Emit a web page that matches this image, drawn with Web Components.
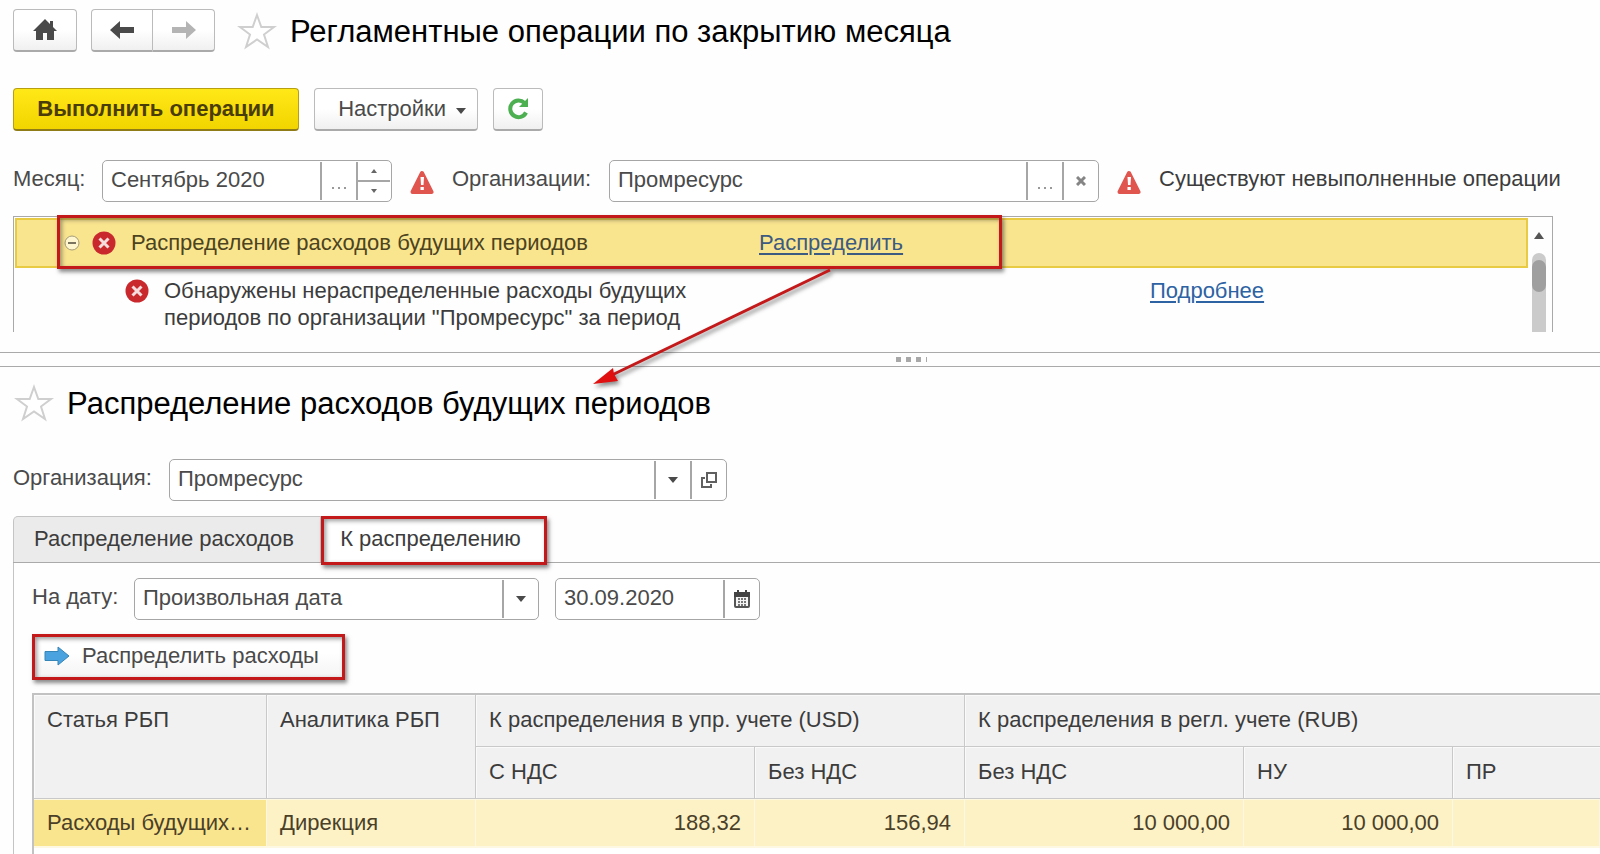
<!DOCTYPE html>
<html lang="ru">
<head>
<meta charset="utf-8">
<title>Регламентные операции по закрытию месяца</title>
<style>
  html, body { margin: 0; height: 100%; }
  body {
    background: #fefefe; color: #4a4a4a; overflow: hidden;
    font: 22px/26px "Liberation Sans", Arial, sans-serif;
  }
</style>
</head>
<body>
<month-closing></month-closing>

<script>
const ICONS = {
  home: ['0 0 24 22', 24, 22, '<path fill="#4a4a4a" d="M12 0 0 12h3v9h7v-7h4v7h7v-9h3l-4-4V2h-3v3z"/>'],
  back: ['0 0 24 18', 24, 18, '<path fill="#4a4a4a" d="M0 9 10 0v6h14v6H10v6z"/>'],
  forward: ['0 0 24 18', 24, 18, '<path fill="#b4b4b4" d="M24 9 14 0v6H0v6h14v6z"/>'],
  star: ['0 0 40 38', 40, 38, '<path fill="#fff" stroke="#cfcfcf" stroke-width="2" d="m20 3 4.300 12H37L27 22.500 31 35l-11-7.500L9 35l4-12.500L3 15h12.700z"/>'],
  refresh: ['0 0 24 24', 24, 24, '<path fill="none" stroke="#4caf50" stroke-width="4" d="M18.500 6A8.300 8.300 0 1 0 20 15.500"/><path fill="#4caf50" d="M22 1v9h-9l3-3 3-3z"/>'],
  caret: ['0 0 10 6', 10, 6, '<path fill="#4a4a4a" d="M0 0h10L5 6z"/>'],
  up: ['0 0 6 4', 6, 4, '<path fill="#666" d="M0 4h6L3 0z"/>'],
  down: ['0 0 6 4', 6, 4, '<path fill="#666" d="M0 0h6L3 4z"/>'],
  scrollup: ['0 0 10 7', 10, 7, '<path fill="#555" d="M0 7h10L5 0z"/>'],
  close: ['0 0 10 10', 10, 10, '<path stroke="#858585" stroke-width="3" d="m1 1 8 8M9 1 1 9"/>'],
  dots: ['0 0 14 4', 14, 4, '<path fill="#999" d="M0 1h2v2H0zM6 1h2v2H6zM12 1h2v2h-2z"/>'],
  open: ['0 0 16 16', 16, 16, '<path fill="none" stroke="#606060" stroke-width="2" d="M6 1h9v9H6zM4 6H1v9h9v-3"/>'],
  calendar: ['0 0 16 18', 16, 18, '<rect x="1" y="3" width="14" height="14" rx="1" fill="#f4f4f4" stroke="#555" stroke-width="2"/><path fill="#444" d="M0 2h16v5H0zM3 0h2v3H3zM11 0h2v3h-2z"/><path stroke="#777" stroke-width="2" stroke-dasharray="2 1" d="M4 9h9M4 12h9M4 15h9"/>'],
  warning: ['0 0 24 24', 24, 24, '<path fill="#e0564f" stroke="#e0564f" stroke-width="4" stroke-linejoin="round" d="M12 3 21.500 22h-19z"/><path fill="#fff" d="M10.500 7h3.500l-.500 8h-2.500zM10.500 17h3.300v3h-3.300z"/>'],
  error: ['0 0 24 24', 24, 24, '<circle cx="12" cy="12" r="11.500" fill="#c9282d"/><path stroke="#f6dcdc" stroke-width="3" d="m7.500 7.500 9 9m0-9-9 9"/>'],
  minus: ['0 0 16 16', 16, 16, '<circle cx="8" cy="8" r="7" fill="#fdf6cf" stroke="#a59c78"/><path stroke="#7a7460" stroke-width="2" d="M4 8h8"/>'],
  arrow: ['0 0 26 20', 26, 20, '<path fill="#4aa3df" stroke="#3585b8" d="M1 5.500h13V1l11 9-11 9v-4.500H1z"/>']
};

function define(name, css, html, setup) {
  const template = document.createElement('template');
  template.innerHTML = `<style>*{box-sizing:border-box}[hidden]{display:none!important}${css}</style>${html}`;
  customElements.define(name, class extends HTMLElement {
    constructor() {
      super();
      this.attachShadow({ mode: 'open' }).append(template.content.cloneNode(true));
    }
    connectedCallback() { if (setup) setup(this, this.shadowRoot); }
  });
}

define('app-icon', ':host{display:inline-flex;flex:none}svg{display:block}', '<span></span>', (el, root) => {
  const [box, w, h, body] = ICONS[el.getAttribute('name')];
  root.querySelector('span').innerHTML = `<svg viewBox="${box}" width="${w}" height="${h}" aria-hidden="true">${body}</svg>`;
});

/* Red frame that highlights the slotted content */
define('red-frame', `
  :host { display: block; position: relative; }
  i { position: absolute; inset: 0; border: 3px solid #c4191a; pointer-events: none;
      box-shadow: 2px 3px 4px rgba(60,60,60,.6), inset 2px 2px 4px rgba(60,60,60,.5); }
`, '<slot></slot><i></i>');

define('push-button', `
  :host { display: block; }
  button { display: flex; align-items: center; justify-content: center; gap: 10px; width: 100%; height: 43px; margin: 0; padding: 0 11px;
    font: inherit; color: #4a4a4a; border: 1px solid #bbb; border-bottom: 2px solid #aaa; border-radius: 4px;
    background: linear-gradient(#fff 50%, #f0f0f0); white-space: nowrap; }
  :host([kind=primary]) button { font-weight: bold; color: #4b3d08; background: linear-gradient(#ffe817, #f2d500); border-color: #b79f10; border-bottom-color: #8f7c16; }
  :host([kind=menu]) button { justify-content: flex-end; }
  :host([kind=left]) button { border-radius: 4px 0 0 4px; }
  :host([kind=right]) button { border-radius: 0 4px 4px 0; border-left: 0; }
  :host([kind=flat]) button { height: 46px; border: 0; border-radius: 0; justify-content: flex-start; gap: 12px; padding: 0 12px 2px; background: linear-gradient(#fff 40%, #f3f3f3); }
`, '<button type="button"><slot></slot></button>', (el, root) => {
  if (el.hasAttribute('name')) root.querySelector('button').setAttribute('aria-label', el.getAttribute('name'));
});

define('page-title', `
  :host { display: flex; align-items: center; gap: 13px; color: #000; }
  h1 { margin: 0; padding-top: 2px; font-size: 31px; line-height: 40px; font-weight: normal; white-space: nowrap; }
`, '<app-icon name="star"></app-icon><h1><slot></slot></h1>');

define('form-field', `
  :host { display: flex; align-items: center; min-width: 0; }
  label { flex: none; width: var(--label); padding-bottom: 4px; white-space: nowrap; }
  .box { flex: 1; display: flex; min-width: 0; height: 42px; border: 1px solid #a6a6a6; border-radius: 5px; background: #fff; position: relative; }
  input, select { flex: 1; min-width: 0; width: 0; border: 0; margin: 0; padding: 0 8px 2px; font: inherit; color: inherit; background: none; outline: 0; appearance: none; }
  button, .mark { flex: none; display: flex; align-items: center; justify-content: center; width: 36px; margin: 1px 0; padding: 0;
    border: 0; border-left: 2px solid #a6a6a6; background: none; }
  .mark { pointer-events: none; }
  .low { padding-top: 13px; }
  .spin { display: flex; flex-direction: column; flex: none; width: 34px; margin: 1px 1px 1px 0; border-left: 2px solid #a6a6a6; }
  .spin button { flex: 1; width: 100%; margin: 0; border: 0; }
  .spin button + button { border-top: 2px solid #a6a6a6; }
`, '<label for="c"></label><div class="box"></div>', (el, root) => {
  const value = el.getAttribute('value');
  const parts = {
    dots: '<button type="button" class="low" aria-label="Выбрать"><app-icon name="dots"></app-icon></button>',
    close: '<button type="button" aria-label="Очистить"><app-icon name="close"></app-icon></button>',
    open: '<button type="button" aria-label="Открыть"><app-icon name="open"></app-icon></button>',
    calendar: '<button type="button" aria-label="Календарь"><app-icon name="calendar"></app-icon></button>',
    drop: '<span class="mark"><app-icon name="caret"></app-icon></span>',
    spin: '<span class="spin"><button type="button" aria-label="Больше"><app-icon name="up"></app-icon></button><button type="button" aria-label="Меньше"><app-icon name="down"></app-icon></button></span>'
  };
  const names = el.getAttribute('parts').split(' ');
  const control = names.includes('drop') ? `<select id="c"><option>${value}</option></select>` : `<input id="c" type="text" value="${value}">`;
  root.querySelector('.box').innerHTML = control + names.map(n => parts[n]).join('');
  const label = root.querySelector('label');
  if (el.hasAttribute('label')) label.textContent = el.getAttribute('label');
  else { label.hidden = true; root.querySelector('#c').setAttribute('aria-label', 'Дата'); }
});

define('operation-list', `
  :host { display: flex; height: 116px; border: 1px solid #a9a9a9; border-bottom: 0; color: #3c3c3c; }
  .rows { flex: 1; min-width: 0; padding: 1px; }
  .row { height: 50px; position: relative; background: #fae58f; color: #4c4320; border: 2px solid #e8cb43; }
  red-frame { position: absolute; left: 40px; top: -5px; width: 945px; height: 54px; }
  .main { display: flex; align-items: center; height: 54px; padding: 2px 0 0 7px; }
  .main .text { flex: none; width: 643px; padding-left: 15px; }
  .main app-icon + app-icon { margin-left: 12px; }
  .detail { display: flex; align-items: flex-start; padding: 9px 0 0 110px; line-height: 27px; }
  .detail app-icon { margin-top: 2px; }
  .detail .text { flex: none; width: 1001px; padding-left: 15px; }
  a { color: #2d62a3; text-decoration: underline; text-decoration-thickness: 2px; text-underline-offset: 3px; }
  .row a { color: #3d5a80; }
  .bar { flex: none; width: 23px; display: flex; flex-direction: column; align-items: center; padding: 15px 3px 0 0; gap: 14px; }
  .track { flex: 1; width: 14px; padding-top: 7px; border-radius: 7px 7px 0 0; background: #cbcbcb; }
  .thumb { height: 32px; border-radius: 7px; background: #9f9f9f; }
`, `<div class="rows">
  <div class="row"><red-frame><div class="main"><app-icon name="minus"></app-icon><app-icon name="error"></app-icon>
    <span class="text">Распределение расходов будущих периодов</span><a href="#distribute">Распределить</a></div></red-frame></div>
  <div class="detail"><app-icon name="error"></app-icon>
    <span class="text">Обнаружены нераспределенные расходы будущих<br>периодов по организации "Промресурс" за период</span><a href="#details">Подробнее</a></div>
</div>
<div class="bar"><app-icon name="scrollup"></app-icon><div class="track"><div class="thumb"></div></div></div>`);

define('pane-splitter', `
  :host { display: flex; justify-content: center; align-items: center; gap: 5px; height: 15px; padding-left: 222px; border: solid #aaa; border-width: 1px 0; }
  i { width: 5px; height: 5px; background: #a8a8a8; }
  i:last-child { width: 1px; }
`, '<i></i><i></i><i></i><i></i>');

define('tab-strip', `
  :host { display: flex; height: 47px; border-bottom: 1px solid #aaa; color: #3c3c3c; }
  button { border: 0; margin: 0; font: inherit; color: inherit; background: #fff; white-space: nowrap; }
  .idle { flex: none; width: 308px; height: 46px; padding: 0 6px 1px 0; background: #ebebeb; border: 1px solid #c4c4c4; border-bottom: 0; border-radius: 5px 0 0 0; }
  red-frame { flex: none; width: 226px; height: 49px; }
  red-frame button { width: 100%; height: 49px; padding: 0 7px 3px 0; }
`, `<button type="button" role="tab" class="idle">Распределение расходов</button>
<red-frame><button type="button" role="tab" aria-selected="true">К распределению</button></red-frame>`);

define('cost-table', `
  :host { display: block; color: #3c3c3c; }
  table { width: 100%; table-layout: fixed; border-collapse: separate; border-spacing: 0; border: solid #c2c2c2; border-width: 2px 0 0 2px; }
  th, td { padding: 0 13px; white-space: nowrap; }
  th { height: 52px; padding-bottom: 2px; font-weight: normal; text-align: left; background: #f1f1f1; border: solid #c9c9c9; border-width: 0 1px 1px 0; box-shadow: inset 1px 1px #fafafa; }
  th:last-child { border-right: 0; }
  th[rowspan] { vertical-align: top; padding-top: 12px; }
  td { height: 49px; padding-bottom: 1px; text-align: right; color: #4a4028; background: #fcf2c6; border: solid #fdf8e2; border-width: 1px 1px 2px 0; }
  td:nth-child(-n+2) { text-align: left; }
  td:first-child { background: #fae58f; }
  .next td { height: 60px; background: #fff; border: 0; }
`, `<table>
  <colgroup><col style="width:233px"><col style="width:209px"><col style="width:279px"><col style="width:210px"><col style="width:279px"><col style="width:209px"><col></colgroup>
  <thead>
    <tr><th rowspan="2">Статья РБП</th><th rowspan="2">Аналитика РБП</th><th colspan="2">К распределения в упр. учете (USD)</th><th colspan="3">К распределения в регл. учете (RUB)</th></tr>
    <tr><th>С НДС</th><th>Без НДС</th><th>Без НДС</th><th>НУ</th><th>ПР</th></tr>
  </thead>
  <tbody>
    <tr><td>Расходы будущих…</td><td>Дирекция</td><td>188,32</td><td>156,94</td><td>10 000,00</td><td>10 000,00</td><td></td></tr>
    <tr class="next"><td></td><td></td><td></td><td></td><td></td><td></td><td></td></tr>
  </tbody>
</table>`);

define('month-closing', `
  :host { display: block; position: relative; height: 100%; overflow: hidden; }
  .line { display: flex; align-items: center; padding: 0 13px; }
  .head { padding-top: 9px; }
  .home { width: 64px; margin-right: 14px; }
  .nav { width: 62px; }
  .head page-title { margin-left: 22px; }
  .tools { margin-top: 36px; gap: 15px; }
  .run { width: 286px; } .set { width: 164px; } .ref { width: 50px; }
  .set app-icon { margin-top: 4px; }
  .filter { margin-top: 29px; }
  .filter app-icon { margin: 1px 0 0 18px; }
  .month { --label: 89px; flex: 0 1 379px; }
  .orgs { --label: 157px; flex: 0 1 647px; margin-left: 18px; }
  .status { margin-left: 18px; padding-bottom: 4px; color: #3c3c3c; white-space: nowrap; }
  operation-list { margin: 14px 47px 0 13px; }
  pane-splitter { margin-top: 20px; }
  .second { padding: 15px 14px 0; }
  .org { --label: 156px; flex: 0 1 714px; }
  .orgline { margin-top: 35px; }
  tab-strip { margin: 15px 0 0 13px; }
  .panel { margin-left: 13px; padding: 15px 0 0 18px; border-left: 1px solid #c4c4c4; }
  .dates { display: flex; gap: 16px; }
  .kind { --label: 102px; flex: 0 1 507px; }
  .date { flex: 0 1 205px; }
  .act { width: 313px; margin: 14px 0 13px; }
  .pointer { position: absolute; left: 580px; top: 262px; }
`, `
<header class="line head">
  <push-button class="home" name="Главная"><app-icon name="home"></app-icon></push-button>
  <push-button class="nav" kind="left" name="Назад"><app-icon name="back"></app-icon></push-button>
  <push-button class="nav" kind="right" name="Вперед"><app-icon name="forward"></app-icon></push-button>
  <page-title>Регламентные операции по закрытию месяца</page-title>
</header>
<div class="line tools">
  <push-button class="run" kind="primary">Выполнить операции</push-button>
  <push-button class="set" kind="menu">Настройки <app-icon name="caret"></app-icon></push-button>
  <push-button class="ref" name="Обновить"><app-icon name="refresh"></app-icon></push-button>
</div>
<div class="line filter">
  <form-field class="month" label="Месяц:" value="Сентябрь 2020" parts="dots spin"></form-field>
  <app-icon name="warning"></app-icon>
  <form-field class="orgs" label="Организации:" value="Промресурс" parts="dots close"></form-field>
  <app-icon name="warning"></app-icon>
  <span class="status">Существуют невыполненные операции</span>
</div>
<operation-list></operation-list>
<pane-splitter></pane-splitter>
<div class="line second"><page-title>Распределение расходов будущих периодов</page-title></div>
<div class="line orgline"><form-field class="org" label="Организация:" value="Промресурс" parts="drop open"></form-field></div>
<tab-strip></tab-strip>
<section class="panel">
  <div class="dates">
    <form-field class="kind" label="На дату:" value="Произвольная дата" parts="drop"></form-field>
    <form-field class="date" value="30.09.2020" parts="calendar"></form-field>
  </div>
  <red-frame class="act"><push-button kind="flat"><app-icon name="arrow"></app-icon>Распределить расходы</push-button></red-frame>
  <cost-table></cost-table>
</section>
<svg class="pointer" width="264" height="140" viewBox="580 262 264 140" aria-hidden="true">
  <g style="filter:drop-shadow(2px 3px 2px rgba(60,60,60,.6))">
    <path d="M830 270 612 375" stroke="#c4191a" stroke-width="3"/>
    <path d="m593 384 20-16 1 6 4 7z" fill="#e01010"/>
  </g>
</svg>`);
</script>
</body>
</html>
